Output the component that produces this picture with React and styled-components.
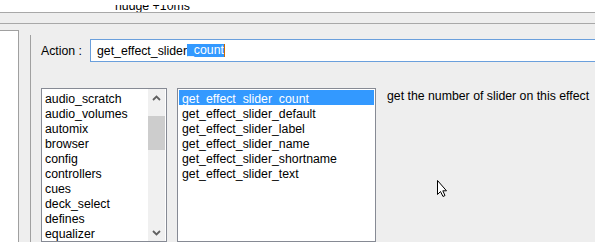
import React from 'react';
import styled, { createGlobalStyle } from 'styled-components';

const Global = createGlobalStyle`
  html, body { margin: 0; padding: 0; background: #eeeeee; }
  body { font-family: "Liberation Sans", Arial, sans-serif; font-size: 12.3px; color: #000; }
`;

const Page = styled.div`
  position: relative;
  width: 595px;
  height: 242px;
  overflow: hidden;
  background: #eeeeee;
  display: flex;
  flex-direction: column;
`;

const TopStrip = styled.div`
  flex: none;
  height: 7px;
  padding-top: 5px;
  background: #fff;
  border-bottom: 1px solid #a8a8a8;
`;

const TopClip = styled.div`
  height: 7px;
  overflow: hidden;
`;

const TopText = styled.div`
  margin: -6px 0 0 115px;
  line-height: 14px;
  white-space: nowrap;
`;

const TabStrip = styled.div`
  flex: none;
  height: 10px;
  border-bottom: 1px solid #a8a8a8;
`;

const Main = styled.div`
  flex: 1;
  display: flex;
  min-height: 0;
`;

const LeftBox = styled.div`
  flex: none;
  width: 18px;
  margin-top: 6px;
  background: #fff;
  border-top: 1px solid #a0a0a0;
  border-right: 1px solid #a0a0a0;
`;

const Divider = styled.div`
  flex: none;
  width: 1px;
  margin: 11px 0 0 11px;
  background: #a0a0a0;
`;

const RightPane = styled.div`
  flex: 1;
  min-width: 0;
  margin-left: 10px;
  display: flex;
  flex-direction: column;
`;

const ActionRow = styled.div`
  margin-top: 15px;
  height: 23px;
  display: flex;
  align-items: center;
`;

const Label = styled.div`
  flex: none;
  width: 49px;
  white-space: nowrap;
`;

const Input = styled.div`
  flex: none;
  width: 540px;
  height: 21px;
  border: 1px solid #6a9fdc;
  background: #fff;
  padding-left: 6px;
  display: flex;
  align-items: center;
  white-space: nowrap;
`;

const Selected = styled.span`
  background: #3399ff;
  color: #fff;
  line-height: 13px;
`;

const Caret = styled.span`
  display: inline-block;
  width: 1px;
  height: 13px;
  background: #cc6a00;
`;

const Rule = styled.div`
  margin-top: 15px;
  height: 1px;
  background: #a0a0a0;
`;

const ListsRow = styled.div`
  margin-top: 11px;
  display: flex;
  align-items: flex-start;
`;

const ListBox = styled.div`
  flex: none;
  width: ${p => p.$w}px;
  height: 152px;
  margin-left: ${p => p.$ml || 0}px;
  border: 1px solid #868a94;
  background: #fff;
  display: flex;
`;

const Items = styled.div`
  flex: 1;
  padding: 1px 1px 0 ${p => (p.$flush ? 0 : 1)}px;
  overflow: hidden;
`;

const Row = styled.div`
  box-sizing: border-box;
  height: 15px;
  line-height: 15px;
  padding: 2px 0 0 3px;
  white-space: nowrap;
  background: ${p => (p.$sel ? '#3399ff' : 'transparent')};
  color: ${p => (p.$sel ? '#fff' : '#000')};
`;

const ScrollBar = styled.div`
  flex: none;
  width: 17px;
  margin-right: 1px;
  background: #f0f0f0;
  display: flex;
  flex-direction: column;
`;

const ScrollButton = styled.div`
  flex: none;
  height: 17px;
  display: flex;
  align-items: center;
  justify-content: center;
`;

const Track = styled.div`
  flex: 1;
`;

const Thumb = styled.div`
  margin-top: 10px;
  height: 34px;
  background: #cdcdcd;
`;

const Description = styled.div`
  margin: 1px 0 0 11px;
  line-height: 15px;
  white-space: nowrap;
`;

const Cursor = styled.svg`
  position: absolute;
  left: 436px;
  top: 179px;
`;

const Chevron = ({ up }) => (
  <svg width="9" height="6" viewBox="0 0 9 6">
    <polyline
      points={up ? '1,5 4.5,1.5 8,5' : '1,1 4.5,4.5 8,1'}
      fill="none"
      stroke="#606060"
      strokeWidth="1.8"
    />
  </svg>
);

const categories = [
  'audio_scratch', 'audio_volumes', 'automix', 'browser', 'config',
  'controllers', 'cues', 'deck_select', 'defines', 'equalizer', 'fx',
];

const actions = [
  'get_effect_slider_count', 'get_effect_slider_default', 'get_effect_slider_label',
  'get_effect_slider_name', 'get_effect_slider_shortname', 'get_effect_slider_text',
];

export default function App() {
  return (
    <Page>
      <Global />
      <TopStrip>
        <TopClip><TopText>nudge +10ms</TopText></TopClip>
      </TopStrip>
      <TabStrip />
      <Main>
        <LeftBox />
        <Divider />
        <RightPane>
          <ActionRow>
            <Label>Action :</Label>
            <Input>
              get_effect_slider<Selected>_count</Selected><Caret />
            </Input>
          </ActionRow>
          <Rule />
          <ListsRow>
            <ListBox $w={124}>
              <Items $flush>
                {categories.map(c => <Row key={c}>{c}</Row>)}
              </Items>
              <ScrollBar>
                <ScrollButton><Chevron up /></ScrollButton>
                <Track><Thumb /></Track>
                <ScrollButton><Chevron /></ScrollButton>
              </ScrollBar>
            </ListBox>
            <ListBox $w={197} $ml={10}>
              <Items>
                {actions.map((a, i) => <Row key={a} $sel={i === 0}>{a}</Row>)}
              </Items>
            </ListBox>
            <Description>get the number of slider on this effect</Description>
          </ListsRow>
        </RightPane>
      </Main>
      <Cursor width="13" height="20" viewBox="0 0 13 20">
        <path d="M1.5,1.5 L1.5,15.5 L4.5,12.5 L7,17.5 L9,16.5 L6.8,11.8 L10.5,11.8 Z" fill="#fff" stroke="#000" strokeWidth="1" />
      </Cursor>
    </Page>
  );
}
